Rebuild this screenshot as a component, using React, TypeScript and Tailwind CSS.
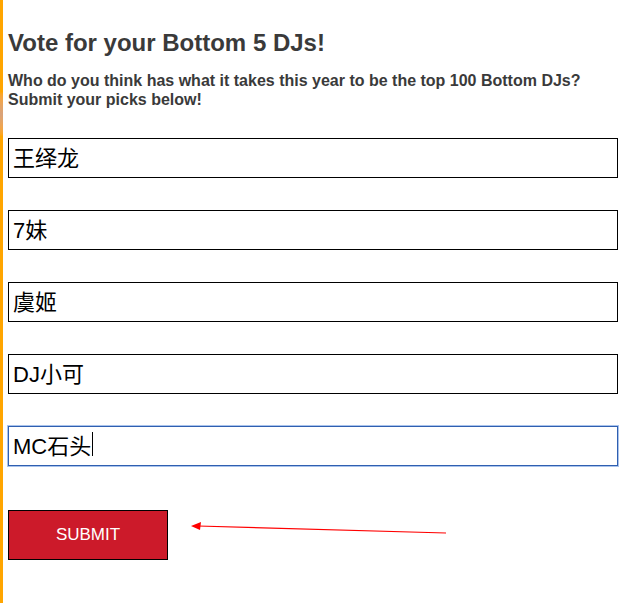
export default function App() {
  const picks = ['王绎龙', '7妹', '虞姬', 'DJ小可'];

  return (
    <div className="relative flex min-h-[603px] bg-white font-['Liberation_Sans','Noto_Sans_CJK_SC',sans-serif]">
      <div className="relative w-[3px] shrink-0 bg-[#ffa500]">
        <div className="absolute left-0 top-[92px] h-[44px] w-[3px] bg-gradient-to-b from-[#ffa500] via-[#d8a27a] to-[#ffa500]" />
      </div>
      <div className="flex-1 pl-[5px] pr-[14px]">
        <h1 className="mt-[29px] text-[24px] font-bold leading-[28px] text-[#3a3a3a]">Vote for your Bottom 5 DJs!</h1>
        <p className="mt-[14px] text-[16px] font-bold leading-[19px] text-[#3a3a3a]">
          Who do you think has what it takes this year to be the top 100 Bottom DJs?
          <br />
          Submit your picks below!
        </p>
        <div className="mt-[29px] flex flex-col gap-[32px]">
          {picks.map((p) => (
            <input
              key={p}
              defaultValue={p}
              className="h-[40px] w-full border border-black px-[4px] pb-[5px] text-[22px] text-black outline-none"
            />
          ))}
          <div className="relative">
            <input
              defaultValue="MC石头"
              className="h-[40px] w-full border border-[#2f5fb0] px-[4px] pb-[5px] text-[22px] text-black shadow-[0_0_0_1px_#a9c3ec] outline-none"
            />
            <div className="pointer-events-none absolute inset-0 flex items-center px-[5px] pb-[5px] text-[22px]">
              <span className="invisible">MC石头</span>
              <span className="ml-px h-[24px] w-px bg-black" />
            </div>
          </div>
        </div>
        <button className="mt-[44px] flex h-[50px] w-[160px] items-center justify-center border border-black bg-[#cc1a2a] text-[17px] text-white">
          SUBMIT
        </button>
      </div>
      <svg className="absolute left-0 top-0" width="632" height="603" viewBox="0 0 632 603">
        <line x1="446" y1="533" x2="198" y2="526" stroke="#ff0000" strokeWidth="1.2" />
        <polygon points="191,526 201,522 200,530" fill="#ff0000" />
      </svg>
    </div>
  );
}
